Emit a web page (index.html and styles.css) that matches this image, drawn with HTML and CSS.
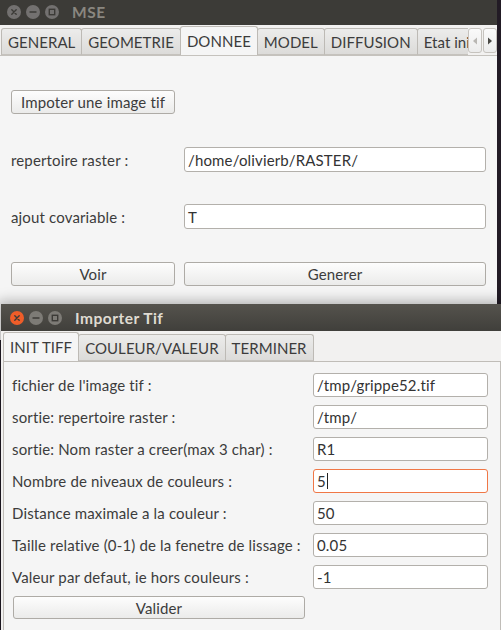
FILE: index.html
```html
<!DOCTYPE html>
<html lang="fr">
<head>
<meta charset="utf-8">
<title>MSE</title>
<link rel="stylesheet" href="styles.css">
</head>
<body>
<div class="desktop">
  <div class="window win-main">
    <div class="titlebar inactive">
      <div class="wbtns">
        <span class="wb"><svg viewBox="0 0 14 14" width="14" height="14"><circle cx="7" cy="7" r="7" class="wb-bg"/><path d="M4.8 4.8 L9.2 9.2 M9.2 4.8 L4.8 9.2" class="wb-sym"/></svg></span>
        <span class="wb"><svg viewBox="0 0 14 14" width="14" height="14"><circle cx="7" cy="7" r="7" class="wb-bg"/><path d="M4 7 H10" class="wb-sym"/></svg></span>
        <span class="wb"><svg viewBox="0 0 14 14" width="14" height="14"><circle cx="7" cy="7" r="7" class="wb-bg"/><rect x="4.3" y="4.3" width="5.4" height="5.4" class="wb-sym"/></svg></span>
      </div>
      <span class="title">MSE</span>
    </div>
    <div class="tabbar main-tabbar">
      <div class="tabs">
        <div class="tab">GENERAL</div>
        <div class="tab">GEOMETRIE</div>
        <div class="tab active">DONNEE</div>
        <div class="tab">MODEL</div>
        <div class="tab">DIFFUSION</div>
        <div class="tab">Etat initial</div>
      </div>
      <div class="scrollers">
        <span class="scroll-btn"><svg viewBox="0 0 6 8" width="6" height="8"><path d="M5 0.5 L1 4 L5 7.5 Z" fill="#b9b7b3"/></svg></span>
        <span class="scroll-btn"><svg viewBox="0 0 6 8" width="6" height="8"><path d="M1 0.5 L5 4 L1 7.5 Z" fill="#4a4945"/></svg></span>
      </div>
    </div>
    <div class="pane main-pane">
      <div class="btn import-btn">Impoter une image tif</div>
      <div class="main-grid">
        <div class="label">repertoire raster :</div>
        <div class="field tall">/home/olivierb/RASTER/</div>
        <div class="label">ajout covariable :</div>
        <div class="field tall">T</div>
        <div class="btn">Voir</div>
        <div class="btn">Generer</div>
      </div>
    </div>
  </div>

  <div class="window win-import">
    <div class="titlebar">
      <div class="wbtns">
        <span class="wb close"><svg viewBox="0 0 14 14" width="14" height="14"><circle cx="7" cy="7" r="7" class="wb-bg"/><path d="M4.8 4.8 L9.2 9.2 M9.2 4.8 L4.8 9.2" class="wb-sym"/></svg></span>
        <span class="wb"><svg viewBox="0 0 14 14" width="14" height="14"><circle cx="7" cy="7" r="7" class="wb-bg"/><path d="M4 7 H10" class="wb-sym"/></svg></span>
        <span class="wb"><svg viewBox="0 0 14 14" width="14" height="14"><circle cx="7" cy="7" r="7" class="wb-bg"/><rect x="4.3" y="4.3" width="5.4" height="5.4" class="wb-sym"/></svg></span>
      </div>
      <span class="title">Importer Tif</span>
    </div>
    <div class="tabbar import-tabbar">
      <div class="tabs">
        <div class="tab active">INIT TIFF</div>
        <div class="tab">COULEUR/VALEUR</div>
        <div class="tab">TERMINER</div>
      </div>
    </div>
    <div class="pane import-pane">
      <div class="form-grid">
        <div class="label">fichier de l'image tif :</div>
        <div class="field">/tmp/grippe52.tif</div>
        <div class="label">sortie: repertoire raster :</div>
        <div class="field">/tmp/</div>
        <div class="label">sortie: Nom raster a creer(max 3 char) :</div>
        <div class="field">R1</div>
        <div class="label">Nombre de niveaux de couleurs :</div>
        <div class="field focus">5<span class="caret"></span></div>
        <div class="label">Distance maximale a la couleur :</div>
        <div class="field">50</div>
        <div class="label">Taille relative (0-1) de la fenetre de lissage :</div>
        <div class="field">0.05</div>
        <div class="label">Valeur par defaut, ie hors couleurs :</div>
        <div class="field">-1</div>
        <div class="btn valider">Valider</div>
      </div>
    </div>
  </div>
</div>
</body>
</html>
```

FILE: styles.css
```css
* { box-sizing: border-box; }
html, body { margin: 0; padding: 0; }
body {
  width: 501px;
  height: 630px;
  overflow: hidden;
  background: #221b25;
  font-family: "Lato", "DejaVu Sans", sans-serif;
  font-size: 15px;
  letter-spacing: 0.15px;
  color: #3c3c3c;
}
.desktop { position: relative; width: 501px; height: 630px; overflow: hidden; }

.window {
  position: absolute;
  background: #f2f1f0;
  display: flex;
  flex-direction: column;
}
.win-main { left: 0; top: 0; width: 497px; height: 340px; }
.win-import {
  left: 1px; top: 304px; width: 500px; height: 340px;
  box-shadow: 0 0 12px 3px rgba(0, 0, 0, 0.28);
}

/* title bars */
.titlebar { flex: none; display: flex; align-items: center; }
.win-main .titlebar {
  height: 25px;
  background: #3c3b37;
  padding: 0 0 2px 7px;
}
.win-import .titlebar {
  height: 27px;
  background: linear-gradient(#55534d, #403f3b);
  padding: 1px 0 0 9px;
}
.wbtns { display: flex; gap: 5px; }
.wb { width: 14px; height: 14px; display: block; }
.wb svg { display: block; }
.wb-bg { fill: #7d7b76; }
.wb-sym { fill: none; stroke: #3c3b37; stroke-width: 1.4; stroke-linecap: round; }
.inactive .wb-bg { fill: #737170; }
.inactive .wb-sym { stroke: #3c3b37; }
.wb.close .wb-bg { fill: #ee5d29; }
.wb.close .wb-sym { stroke: #3c3b37; }
.title {
  margin-left: 13px;
  font-weight: bold;
  font-size: 15.5px;
  color: #dfdbd2;
  letter-spacing: 0.5px;
}
.inactive .title { color: #8a8780; }

/* tabs */
.tabbar {
  flex: none;
  height: 30px;
  display: flex;
  align-items: flex-end;
  padding-left: 2px;
  position: relative;
  z-index: 1;
}
.main-tabbar { padding-left: 1px; }
.tabs {
  display: flex;
  align-items: flex-end;
  flex: 1;
  overflow: hidden;
  min-width: 0;
}
.tab {
  flex: none;
  height: 27px;
  padding: 0 6px;
  display: flex;
  align-items: center;
  border: 1px solid #bdbab5;
  border-bottom-color: #c5c2bd;
  border-radius: 3px 3px 0 0;
  background: linear-gradient(#ececeb, #dcdbd9);
  margin-right: -1px;
  white-space: nowrap;
  letter-spacing: 0.05px;
  color: #3c3c3c;
}
.tab.active {
  height: 30px;
  background: #f5f5f5;
  border-bottom-color: #f5f5f5;
  margin-bottom: -1px;
  position: relative;
  z-index: 2;
}
.scrollers { flex: none; display: flex; gap: 1px; align-self: stretch; padding-top: 3px; padding-bottom: 2px; }
.scroll-btn {
  width: 14px;
  display: flex;
  align-items: center;
  justify-content: center;
  border: 1px solid #c6c3be;
  border-radius: 3px;
  background: linear-gradient(#fafafa, #ececec);
}

/* panes */
.pane {
  flex: 1;
  background: #f5f5f5;
  border-top: 1px solid #c5c2bd;
}
.main-pane { padding: 34px 10px 0 11px; }
.import-btn { width: 164px; height: 24px; }
.main-grid {
  display: grid;
  grid-template-columns: 164px 302px;
  column-gap: 9px;
  margin-top: 33px;
  row-gap: 32px;
  align-items: center;
}
.main-grid .btn { height: 24px; margin-top: 1px; }

.import-pane {
  margin-left: 2px;
  border: 1px solid #c0bdb8;
  padding: 11px 12px 0 8px;
}
.form-grid {
  display: grid;
  grid-template-columns: 1fr 175px;
  column-gap: 4px;
  row-gap: 8px;
  align-items: center;
}

.label { white-space: nowrap; }
.field {
  height: 24px;
  background: #ffffff;
  border: 1px solid #b3b0ab;
  border-radius: 3px;
  padding: 0 3px;
  display: flex;
  align-items: center;
  white-space: nowrap;
  color: #333333;
}
.field.tall { height: 25px; }
.field.focus { border-color: #f07746; }
.caret { display: inline-block; width: 1px; height: 16px; background: #222; margin-left: 1px; }

.btn {
  display: flex;
  align-items: center;
  justify-content: center;
  border: 1px solid #aeaba6;
  border-radius: 3px;
  background: linear-gradient(#fdfdfd, #ebebea);
  color: #3c3c3c;
  white-space: nowrap;
}
.valider { width: 292px; height: 23px; margin-left: 1px; margin-top: -1px; }
```
